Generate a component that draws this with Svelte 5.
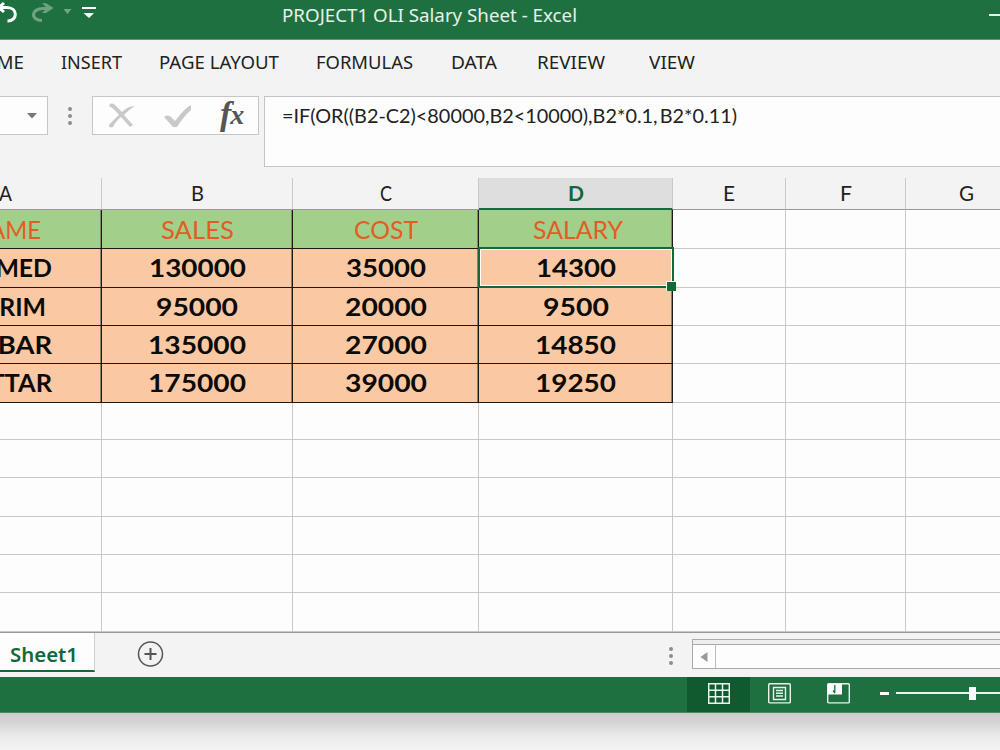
<script lang="ts">
  interface Column {
    name: string;
    width: number;
    label: number;
  }

  const tabs = [
    { name: "INSERT", text: 61, box: 98 },
    { name: "PAGE LAYOUT", text: 120, box: 157 },
    { name: "FORMULAS", text: 97, box: 135 },
    { name: "DATA", text: 46, box: 85.5 },
    { name: "REVIEW", text: 68, box: 112 },
    { name: "VIEW", text: 46, box: 60 },
  ];

  const columns: Column[] = [
    { name: "A", width: 192, label: 13 },
    { name: "B", width: 191, label: 13 },
    { name: "C", width: 186, label: 12 },
    { name: "D", width: 194, label: 16 },
    { name: "E", width: 113, label: 12 },
    { name: "F", width: 120, label: 12 },
    { name: "G", width: 122, label: 15 },
  ];

  // [text, drawn width]
  type Cell = [string, number];

  const titles: Cell[] = [["NAME", 70], ["SALES", 73], ["COST", 64], ["SALARY", 90]];

  const rows: { height: number; cells: Cell[] }[] = [
    { height: 39, cells: [["AHMED", 93], ["130000", 97], ["35000", 80], ["14300", 80]] },
    { height: 38, cells: [["KARIM", 81], ["95000", 82], ["20000", 82], ["9500", 66]] },
    { height: 38, cells: [["AKBAR", 92], ["135000", 98], ["27000", 82], ["14850", 81]] },
    { height: 39, cells: [["SATTAR", 92], ["175000", 98], ["39000", 82], ["19250", 81]] },
  ];

  const emptyRows = [37, 38, 39, 38, 38, 39];

  let selected = $state({ row: 0, col: 3 });

  // stretches a label to the given width
  const fit = (el: HTMLElement, width: number) => {
    const natural = el.getBoundingClientRect().width;
    el.style.width = `${width}px`;
    el.style.transform = `scaleX(${width / natural})`;
  };
</script>

<div class="window">
  <header class="titlebar">
    <svg class="quick" width="110" height="30" viewBox="0 0 110 30" fill="none">
      <path d="M-4 7.5H7C18 7.5 18 21 7.5 21" stroke="#fff" stroke-width="3" />
      <path d="M4 3L-1 7.5 4 12" stroke="#fff" stroke-width="3" />
      <path d="M49 8.500H43C31 8.5 30 20 42 20.5" stroke="#6fa282" stroke-width="3.2" />
      <path d="M42 3.2h4L53.5 8 46 13h-4l5-5z" fill="#6fa282" />
      <path d="M63.5 9h8l-4 5z" fill="#74a687" />
      <path d="M82 7h14v2H82zM83.5 13h10.5l-5 5z" fill="#fff" />
    </svg>
    <span class="fit title" use:fit={295}>PROJECT1 OLI Salary Sheet - Excel</span>
    <div class="minimize"></div>
  </header>

  <nav class="tabs">
    <div class="tab home"><span class="fit" use:fit={56}>HOME</span></div>
    {#each tabs as tab}
      <div class="tab" style="width: {tab.box}px"><span class="fit" use:fit={tab.text}>{tab.name}</span></div>
    {/each}
  </nav>

  <section class="formula-row">
    <div class="name-box">
      <svg width="12" height="6" viewBox="0 0 12 6"><path d="M1 0h10L6 5.5z" fill="#777" /></svg>
    </div>
    <div class="dots"><i></i><i></i><i></i></div>
    <div class="tools">
      <svg width="27" height="26" viewBox="0 0 27 26"><path d="M2 1c3-1 4 0 6 2l6 6c4-4 8-6 13-6-5 3-8 6-11 9l9 10-3 2-9-10c-4 3-6 6-8 10-3 1-4 0-4-2 3-3 6-7 10-10C8 8 5 5 1 3z" fill="#c9c9c9" /></svg>
      <svg class="check" width="28" height="24" viewBox="0 0 28 24"><path d="M0 13c3-2 5-2 7 0l4 4C16 11 21 4 27 1v5c-6 5-10 11-14 17h-4C6 20 3 16 0 13z" fill="#c9c9c9" /></svg>
      <span class="fx"><b>f</b><b class="x">x</b></span>
    </div>
    <div class="formula"><span class="fit" use:fit={455}>=IF(OR((B2-C2)&lt;80000,B2&lt;10000),B2*0.1,<span class="last">B2*0.11)</span></span></div>
  </section>

  <main class="sheet">
    <div class="row heads">
      {#each columns as col, c}
        <div class="head" class:active={c === selected.col} style="width: {col.width}px">
          <span class="fit" use:fit={col.label}>{col.name}</span>
        </div>
      {/each}
    </div>

    <div class="row" style="height: 39px">
      {#each columns as col, c}
        <div class="cell" class:green={c < 4} style="width: {col.width}px">
          {#if titles[c]}<span class="fit" use:fit={titles[c][1]}>{titles[c][0]}</span>{/if}
        </div>
      {/each}
    </div>

    {#each rows as row, r}
      <div class="row" style="height: {row.height}px">
        {#each columns as col, c}
          <!-- svelte-ignore a11y_click_events_have_key_events, a11y_no_static_element_interactions -->
          <div
            class="cell"
            class:orange={c < 4}
            class:selected={r === selected.row && c === selected.col}
            style="width: {col.width}px"
            onclick={() => selected = { row: r, col: c }}
          >
            {#if row.cells[c]}<span class="fit" use:fit={row.cells[c][1]}>{row.cells[c][0]}</span>{/if}
          </div>
        {/each}
      </div>
    {/each}

    {#each emptyRows as height}
      <div class="row" style="height: {height}px">
        {#each columns as col}
          <div class="cell" style="width: {col.width}px"></div>
        {/each}
      </div>
    {/each}
  </main>

  <section class="sheetbar">
    <div class="sheet-tab"><span class="fit" use:fit={68}>Sheet1</span></div>
    <svg class="add" width="28" height="28" viewBox="0 0 28 28" fill="none" stroke="#555">
      <circle cx="14.5" cy="14" r="12" stroke-width="1.5" />
      <path d="M8.5 14h12M14.5 8v12" stroke-width="2" />
    </svg>
    <div class="dots small"><i></i><i></i><i></i></div>
    <div class="scroll">
      <div class="arrow"><svg width="8" height="12" viewBox="0 0 8 12"><path d="M7.5 1v10L.5 6z" fill="#999" /></svg></div>
    </div>
  </section>

  <footer class="status">
    <div class="view on">
      <svg width="22" height="21" viewBox="0 0 22 21" fill="none" stroke="#e9f4ec" stroke-width="1.5">
        <path d="M.7.7h20.6v19.6H.7zM.7 7.2h20.6M.7 13.8h20.6M7.5.7v19.6M14.5.7v19.6" />
      </svg>
    </div>
    <svg class="page" width="23" height="21" viewBox="0 0 23 21" fill="none" stroke="#e9f4ec" stroke-width="1.4">
      <rect x=".7" y=".7" width="21.6" height="19.2" rx="1" />
      <path d="M5.5 4.5h12v12h-12zM8 7.5h7M8 10.2h7M8 13h7" />
    </svg>
    <svg class="break" width="23" height="21" viewBox="0 0 23 21" fill="none">
      <rect x=".7" y=".7" width="21.6" height="19.2" rx="1" stroke="#e9f4ec" stroke-width="1.4" />
      <path d="M1 1h14v10.500H1z" fill="#fff" />
      <path d="M7.8 2v8M6 7.5l2 2.500" stroke="#1d6b3e" stroke-width="1.3" />
    </svg>
    <div class="minus"></div>
    <div class="zoom"><div class="thumb"></div></div>
  </footer>
</div>

<style>
  :global(body) {
    margin: 0;
    overflow: hidden;
  }

  .window {
    width: 1000px;
    height: 750px;
    overflow: hidden;
    display: flex;
    flex-direction: column;
    background: linear-gradient(#f3f3f3 0 712px, #cbcbcb 713px, #d4d4d4 722px, #e9e9e9 735px, #f4f4f4 750px);
    font-family: "Noto Sans", "Open Sans", sans-serif;
    color: #222;
  }

  .window * {
    box-sizing: border-box;
  }

  .fit {
    display: inline-block;
    flex: none;
    white-space: nowrap;
    text-align: left;
    transform-origin: left center;
  }

  .titlebar {
    height: 40px;
    flex: none;
    display: flex;
    align-items: flex-start;
    background: #1f7041;
    border-bottom: 1px solid #5c9672;
  }

  .title {
    margin: 2px 0 0 172px;
    line-height: 26px;
    font-size: 18px;
    color: #e6f1e9;
  }

  .minimize {
    width: 20px;
    height: 2px;
    flex: none;
    margin: 14px -9px 0 auto;
    background: #e4f0e8;
  }

  .tabs {
    height: 56px;
    flex: none;
    display: flex;
    padding-top: 9px;
    line-height: 26px;
    font-size: 18.5px;
  }

  .tab {
    flex: none;
  }

  .home {
    width: 93px;
    margin-left: -32px;
  }

  .formula-row {
    height: 82px;
    flex: none;
    display: flex;
    align-items: flex-start;
  }

  .name-box {
    width: 48px;
    height: 39px;
    display: flex;
    align-items: center;
    justify-content: flex-end;
    padding-right: 9px;
    background: #fdfdfd;
    border: 1px solid #c6c6c6;
    border-left: 0;
  }

  .dots {
    display: flex;
    flex-direction: column;
    gap: 3px;
    margin: 11px 20px 0;
  }

  .dots i {
    width: 4px;
    height: 4px;
    border-radius: 50%;
    background: #8d8d8d;
  }

  .tools {
    width: 167px;
    height: 39px;
    display: flex;
    align-items: center;
    padding-left: 15px;
    background: #fdfdfd;
    border: 1px solid #c6c6c6;
  }

  .check {
    margin-left: 29px;
  }

  .fx {
    display: flex;
    align-items: center;
    margin: -4px 0 0 28px;
    font: italic 34px/36px "Liberation Serif", serif;
    color: #555;
  }

  .fx .x {
    margin: 2px 0 0 -1px;
    font-size: 28px;
  }

  .formula {
    flex: 1;
    height: 71px;
    margin-left: 5px;
    padding: 6px 0 0 17px;
    background: #fdfdfd;
    border: 1px solid #c4c4c4;
    border-right: 0;
    font: 18.7px/26px Lato, sans-serif;
  }

  .last {
    margin-left: 2px;
  }

  .sheet {
    height: 454px;
    flex: none;
    overflow: hidden;
    font-family: Lato, sans-serif;
  }

  .row {
    display: flex;
    width: max-content;
    margin-left: -90px;
  }

  .heads {
    height: 32px;
  }

  .head {
    display: flex;
    align-items: center;
    justify-content: center;
    padding-bottom: 2px;
    border-right: 1px solid #c9c9c9;
    border-bottom: 1px solid #999;
    font-size: 20.5px;
  }

  .head.active {
    padding-bottom: 0;
    background: #dedede;
    border-bottom: 2px solid #166b3a;
    color: #11683a;
    font-weight: bold;
  }

  .cell {
    display: flex;
    align-items: center;
    justify-content: center;
    background: #fdfdfd;
    border-right: 1px solid #c8c8c8;
    border-bottom: 1px solid #c8c8c8;
  }

  .green {
    background: #a2cf89;
    border-color: #1a1a16;
    color: #e25d26;
    font-size: 25.5px;
  }

  .green:nth-child(4) {
    padding-left: 4px;
  }

  .orange {
    padding-bottom: 1px;
    background: #fac8a3;
    border-color: #1a1a16;
    color: #0b0b08;
    font-size: 24.5px;
    font-weight: bold;
  }

  .green,
  .orange {
    box-shadow: inset -1px 0 #8b8366;
  }

  .selected {
    position: relative;
  }

  .selected::before {
    content: "";
    position: absolute;
    inset: -2px -2px -1px -1px;
    border: 2px solid #126a39;
    box-shadow: inset 0 0 0 1px #fff;
  }

  .selected::after {
    content: "";
    position: absolute;
    right: -4px;
    bottom: -4px;
    width: 9px;
    height: 9px;
    background: #126a39;
    border: 1px solid #fff;
    border-width: 1px 0 0 1px;
  }

  .sheetbar {
    height: 45px;
    flex: none;
    display: flex;
    align-items: flex-start;
    background: #f3f3f3;
    border-top: 1px solid #999;
  }

  .sheet-tab {
    width: 95px;
    height: 39px;
    padding: 7px 0 0 10px;
    background: #fdfdfd;
    border-right: 1px solid #d0d0d0;
    border-bottom: 2px solid #11683a;
    line-height: 28px;
    font-size: 20.5px;
    font-weight: 600;
    color: #11683a;
  }

  .add {
    margin: 7px 0 0 41px;
  }

  .small {
    margin: 14px 19px 0 505px;
  }

  .scroll {
    flex: 1;
    height: 30px;
    margin-top: 6px;
    padding-top: 5px;
    background: #fdfdfd;
    border: 1px solid #a9a9a9;
    border-right: 0;
    box-shadow: inset 0 4px #eee, inset 0 5px #aaa;
  }

  .arrow {
    width: 23px;
    height: 23px;
    display: flex;
    align-items: center;
    justify-content: center;
    border-right: 1px solid #bbb;
  }

  .status {
    height: 36px;
    flex: none;
    display: flex;
    align-items: center;
    padding-left: 687px;
    background: #1f7041;
    border-bottom: 1px solid #4c8563;
  }

  .status > * {
    flex: none;
  }

  .view {
    width: 63px;
    height: 35px;
    display: flex;
    align-items: center;
    justify-content: center;
    padding-bottom: 3px;
  }

  .view.on {
    background: #115a30;
  }

  .page {
    margin: -2px 0 0 18px;
  }

  .break {
    margin: -2px 0 0 36px;
  }

  .minus {
    width: 9px;
    height: 3px;
    margin: -3px 7px 0 30px;
    background: #fff;
  }

  .zoom {
    width: 104px;
    height: 2px;
    margin-top: -3px;
    display: flex;
    align-items: center;
    padding-left: 73px;
    background: #e9f4ec;
  }

  .thumb {
    width: 7px;
    height: 13px;
    flex: none;
    background: #fff;
  }
</style>
